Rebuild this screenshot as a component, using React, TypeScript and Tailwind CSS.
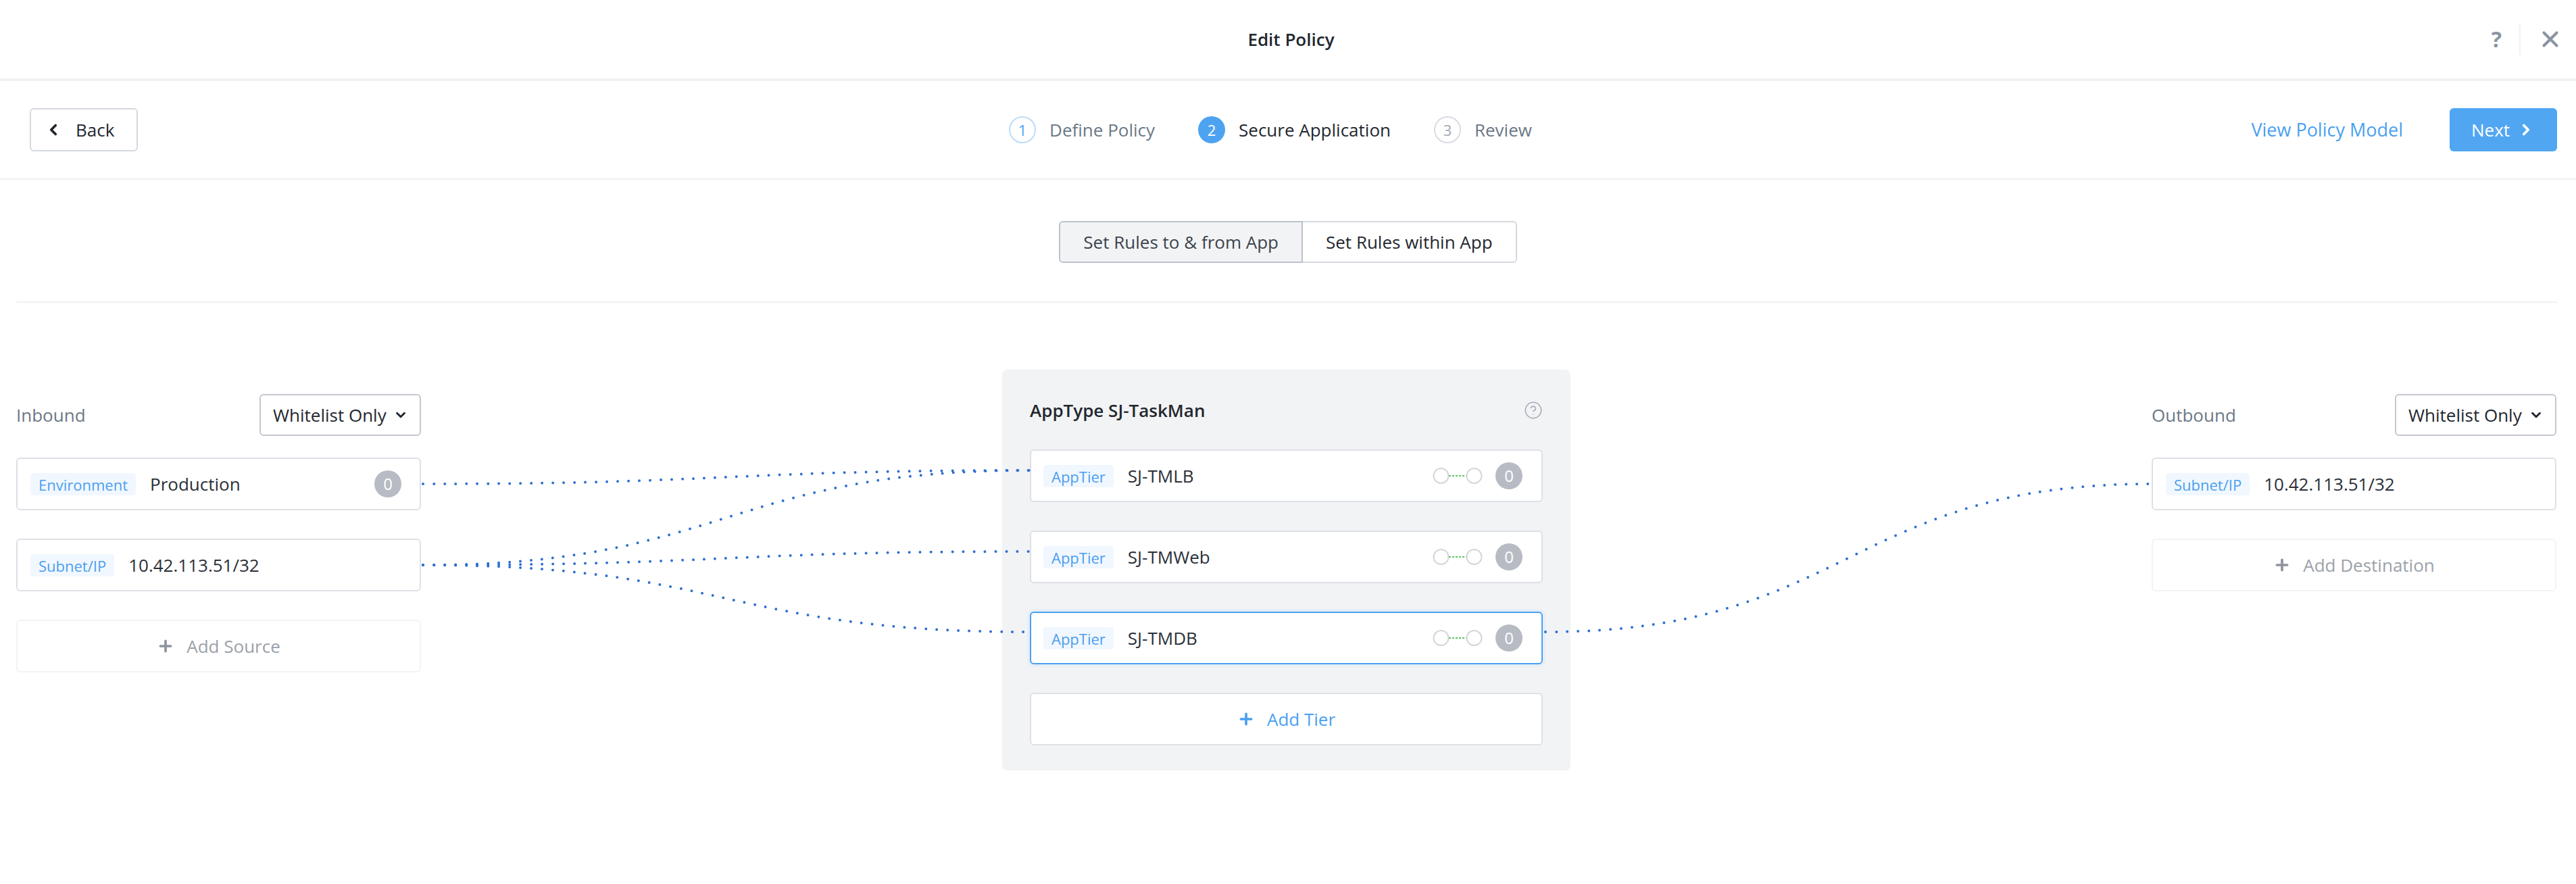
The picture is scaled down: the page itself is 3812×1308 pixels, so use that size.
import React from 'react';
import { ChevronLeft, ChevronRight, ChevronDown, X, Plus, CircleHelp } from 'lucide-react';

const BLUE = '#4a9ff0';

const Tag: React.FC<{ label: string }> = ({ label }) => (
  <span className="h-[33px] px-[12px] rounded-[4px] bg-[#f1f7fe] text-[#4a9ff0] text-[22px] leading-[35px] whitespace-nowrap">
    {label}
  </span>
);

const Badge = () => (
  <span className="w-[40px] h-[40px] rounded-full bg-[#b7bcc4] text-white text-[24px] flex items-center justify-center leading-none">
    0
  </span>
);

// the little "o---o" rule connector inside a tier row
const Connector = () => (
  <svg width="74" height="26" viewBox="0 0 74 26">
    <circle cx="12.5" cy="13" r="11" fill="#fff" stroke="#d3d7dd" strokeWidth="2" />
    <line x1="24" y1="13" x2="50" y2="13" stroke="#5ec460" strokeWidth="2" strokeDasharray="3 2" />
    <circle cx="61.5" cy="13" r="11" fill="#fff" stroke="#d3d7dd" strokeWidth="2" />
  </svg>
);

const Dropdown = () => (
  <div className="h-[62px] w-[239px] border-2 border-[#c3c8d0] rounded-[6px] flex items-center justify-between pl-[18px] pr-[17px]">
    <span className="text-[26px] text-[#22272e]">Whitelist Only</span>
    <ChevronDown size={22} strokeWidth={3.2} className="text-[#22272e]" />
  </div>
);

const EndpointCard: React.FC<{ tag: string; value: string; badge?: boolean }> = ({ tag, value, badge }) => (
  <div className="h-[78px] border-2 border-[#dde0e5] rounded-[6px] bg-white flex items-center pl-[19px] pr-[27px]">
    <Tag label={tag} />
    <span className="ml-[21px] text-[26px] text-[#2a3038] flex-1">{value}</span>
    {badge && <Badge />}
  </div>
);

const AddCard: React.FC<{ label: string }> = ({ label }) => (
  <div className="h-[78px] border-2 border-[#f2f3f5] rounded-[6px] flex items-center justify-center gap-[18px] text-[#9ba1a9]">
    <Plus size={26} strokeWidth={3.4} className="text-[#8e949c]" />
    <span className="text-[26px]">{label}</span>
  </div>
);

const TierCard: React.FC<{ name: string; selected?: boolean }> = ({ name, selected }) => (
  <div
    className={
      selected
        ? 'h-[78px] border-2 border-[#4a9ff0] shadow-[0_0_0_4px_#e6eef8] rounded-[6px] bg-white flex items-center pl-[18px] pr-[28px]'
        : 'h-[78px] border-2 border-[#dde0e5] rounded-[6px] bg-white flex items-center pl-[18px] pr-[28px]'
    }
  >
    <Tag label="AppTier" />
    <span className="ml-[21px] text-[26px] text-[#2a3038] flex-1">{name}</span>
    <Connector />
    <span className="ml-[19px]">
      <Badge />
    </span>
  </div>
);

const Step: React.FC<{ n: number; label: string; state: 'done' | 'active' | 'todo' }> = ({ n, label, state }) => {
  const circle =
    state === 'active'
      ? 'bg-[#4ea3f1] text-white'
      : state === 'done'
      ? 'border-2 border-[#bcdcf9] text-[#4a9ff0]'
      : 'border-2 border-[#d8dce2] text-[#a0a8b3]';
  return (
    <div className="flex items-center">
      <span className={`w-[40px] h-[40px] rounded-full flex items-center justify-center text-[22px] leading-none ${circle}`}>
        {n}
      </span>
      <span className={`ml-[20px] text-[26px] ${state === 'active' ? 'text-[#22272e]' : 'text-[#6b7785]'}`}>{label}</span>
    </div>
  );
};

// dotted S-curves between sources, tiers and destinations (coords relative to the flow area)
const curve = (x1: number, y1: number, x2: number, y2: number) => {
  const mx = (x1 + x2) / 2;
  return `M${x1} ${y1} C${mx} ${y1} ${mx} ${y2} ${x2} ${y2}`;
};

const links = [
  curve(626, 268, 1524, 248),
  curve(626, 388, 1524, 248),
  curve(626, 388, 1524, 368),
  curve(626, 388, 1524, 487),
  curve(2287, 487, 3184, 268),
];

export default function App() {
  return (
    <div className="w-[3812px] h-[1308px] bg-white font-['Open_Sans',sans-serif] text-[#22272e] overflow-hidden">
      {/* Title bar */}
      <div className="h-[116px] grid grid-cols-[1fr_auto_1fr] items-center pl-[28px] pr-[19px]">
        <div />
        <div className="text-[26px] font-semibold">Edit Policy</div>
        <div className="flex items-center justify-end">
          <span className="text-[32px] font-bold text-[#8a94a3] leading-none">?</span>
          <div className="w-[2px] h-[46px] bg-[#eef0f2] ml-[26px] mr-[25px]" />
          <X size={38} strokeWidth={2.6} className="text-[#8a94a3]" />
        </div>
      </div>
      <div className="h-[4px] bg-[#f2f2f2]" />

      {/* Wizard nav */}
      <div className="h-[144px] grid grid-cols-[1fr_auto_1fr] items-center pl-[44px] pr-[28px]">
        <div>
          <button className="h-[64px] w-[160px] border-2 border-[#d5d9e0] rounded-[6px] flex items-center pl-[20px] text-[26px] text-[#22272e]">
            <ChevronLeft size={26} strokeWidth={3.5} />
            <span className="ml-[20px]">Back</span>
          </button>
        </div>
        <div className="flex items-center gap-[64px] mr-[68px]">
          <Step n={1} label="Define Policy" state="done" />
          <Step n={2} label="Secure Application" state="active" />
          <Step n={3} label="Review" state="todo" />
        </div>
        <div className="flex items-center justify-end">
          <span className="text-[27px] text-[#4a9ff0]">View Policy Model</span>
          <button className="ml-[69px] h-[64px] w-[159px] rounded-[6px] bg-[#51a6f2] text-white flex items-center pl-[32px] text-[26px]">
            <span>Next</span>
            <ChevronRight size={26} strokeWidth={3.5} className="ml-[11px]" />
          </button>
        </div>
      </div>
      <div className="h-[2px] bg-[#f0f0f0]" />

      {/* Rule scope toggle */}
      <div className="h-[180px] flex justify-center pt-[61px]">
        <div className="flex h-[62px]">
          <div className="h-full px-[34px] border-2 border-[#bcc2cc] bg-[#f2f3f5] rounded-l-[6px] flex items-center text-[26px] text-[#3c434d]">
            Set Rules to &amp; from App
          </div>
          <div className="h-full px-[34px] border-2 border-l-0 border-[#d5d9e0] bg-white rounded-r-[6px] flex items-center text-[26px] text-[#22272e]">
            Set Rules within App
          </div>
        </div>
      </div>
      <div className="h-[2px] bg-[#f0f0f0] ml-[24px] mr-[28px]" />

      {/* Flow */}
      <div className="relative flex justify-between pl-[24px] pr-[29px] pt-[99px]">
        <svg className="absolute left-0 top-0 pointer-events-none" width="3812" height="860">
          {links.map((d, i) => (
            <path
              key={i}
              d={d}
              fill="none"
              stroke="#2f6fd1"
              strokeWidth="4"
              strokeLinecap="round"
              strokeDasharray="0 16"
            />
          ))}
        </svg>

        {/* Inbound */}
        <div className="w-[599px] mt-[36px] flex flex-col">
          <div className="h-[62px] flex items-center justify-between">
            <span className="text-[26px] text-[#6b7785]">Inbound</span>
            <Dropdown />
          </div>
          <div className="flex flex-col gap-[42px] mt-[32px]">
            <EndpointCard tag="Environment" value="Production" badge />
            <EndpointCard tag="Subnet/IP" value="10.42.113.51/32" />
            <AddCard label="Add Source" />
          </div>
        </div>

        {/* App */}
        <div className="w-[841px] bg-[#f2f3f5] rounded-[8px] px-[41px] pt-[40px] pb-[37px] flex flex-col">
          <div className="h-[40px] flex items-center justify-between mb-[38px]">
            <span className="text-[26px] font-semibold text-[#22272e]">AppType SJ-TaskMan</span>
            <CircleHelp size={28} strokeWidth={1.3} className="text-[#a3aab4]" />
          </div>
          <div className="flex flex-col gap-[42px]">
            <TierCard name="SJ-TMLB" />
            <TierCard name="SJ-TMWeb" />
            <TierCard name="SJ-TMDB" selected />
            <div className="h-[78px] border-2 border-[#dde0e5] rounded-[6px] bg-white flex items-center justify-center gap-[18px]" style={{ color: BLUE }}>
              <Plus size={26} strokeWidth={3.4} />
              <span className="text-[26px]">Add Tier</span>
            </div>
          </div>
        </div>

        {/* Outbound */}
        <div className="w-[599px] mt-[36px] flex flex-col">
          <div className="h-[62px] flex items-center justify-between">
            <span className="text-[26px] text-[#6b7785]">Outbound</span>
            <Dropdown />
          </div>
          <div className="flex flex-col gap-[42px] mt-[32px]">
            <EndpointCard tag="Subnet/IP" value="10.42.113.51/32" />
            <AddCard label="Add Destination" />
          </div>
        </div>
      </div>
    </div>
  );
}
